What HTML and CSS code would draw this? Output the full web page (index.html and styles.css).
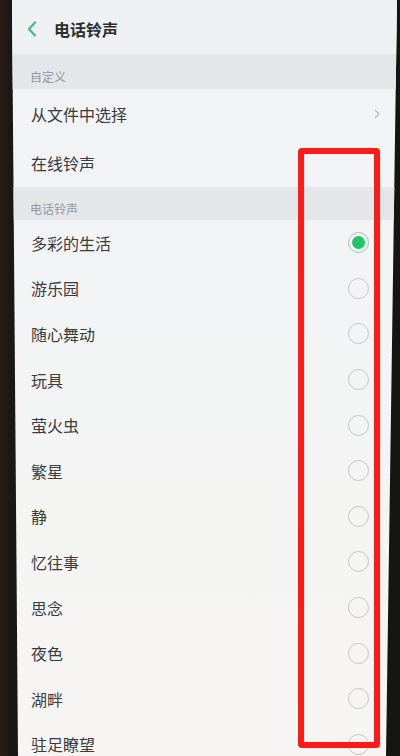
FILE: index.html
```html
<!DOCTYPE html>
<html lang="zh-CN">
<head>
    <meta charset="UTF-8">
    <meta name="viewport" content="width=device-width, initial-scale=1.0">
    <title>电话铃声</title>
    <link rel="stylesheet" href="styles.css">
</head>
<body>
<div class="phone">
    <div class="screen">
        <div class="header">
            <svg class="back" width="12" height="16" viewBox="0 0 12 16">
                <path d="M9 1.5 L3 8 L9 14.5" fill="none" stroke="#3dbd7d" stroke-width="2.2" stroke-linecap="round" stroke-linejoin="round"/>
            </svg>
            <span class="title">电话铃声</span>
        </div>

        <div class="section">自定义</div>
        <div class="item tall">
            <span>从文件中选择</span>
            <svg class="arrow" width="6" height="10" viewBox="0 0 6 10">
                <path d="M1 1 L5 5 L1 9" fill="none" stroke="#b5b7ba" stroke-width="1.2"/>
            </svg>
        </div>
        <div class="item tall"><span>在线铃声</span></div>

        <div class="section short">电话铃声</div>
        <div class="list">
            <div class="item"><span>多彩的生活</span><i class="radio checked"></i></div>
            <div class="item"><span>游乐园</span><i class="radio"></i></div>
            <div class="item"><span>随心舞动</span><i class="radio"></i></div>
            <div class="item"><span>玩具</span><i class="radio"></i></div>
            <div class="item"><span>萤火虫</span><i class="radio"></i></div>
            <div class="item"><span>繁星</span><i class="radio"></i></div>
            <div class="item"><span>静</span><i class="radio"></i></div>
            <div class="item"><span>忆往事</span><i class="radio"></i></div>
            <div class="item"><span>思念</span><i class="radio"></i></div>
            <div class="item"><span>夜色</span><i class="radio"></i></div>
            <div class="item"><span>湖畔</span><i class="radio"></i></div>
            <div class="item"><span>驻足瞭望</span><i class="radio"></i></div>
        </div>
    </div>
    <div class="mark"></div>
</div>
</body>
</html>
```

FILE: styles.css
```css
html, body {
    margin: 0;
    height: 100%;
    overflow: hidden;
}

body {
    background: linear-gradient(90deg, #2a1d14 0px, #1b1713 10px, #151614 100%);
    font-family: "Noto Sans CJK SC", "Noto Sans", sans-serif;
}

.phone {
    position: relative;
    width: 400px;
    height: 756px;
}

.screen {
    height: 756px;
    display: flex;
    flex-direction: column;
    background: linear-gradient(180deg, #f1f3f5 0%, #f3f4f4 50%, #f6f5f3 100%);
    clip-path: polygon(12px 0, 397px 0, 386px 100%, 18px 100%);
}

.header {
    height: 54px;
    flex-shrink: 0;
    display: flex;
    align-items: center;
    padding-left: 26px;
    padding-top: 3px;
    box-sizing: border-box;
    background: #eef0f2;
}

.back {
    margin-right: 16px;
}

.title {
    font-size: 16px;
    font-weight: 700;
    color: #2c2e30;
}

.section {
    height: 35px;
    flex-shrink: 0;
    display: flex;
    align-items: center;
    padding-left: 30px;
    padding-top: 10px;
    box-sizing: border-box;
    background: #e4e6e9;
    font-size: 12px;
    color: #94969a;
}

.section.short {
    height: 33px;
    padding-top: 9px;
}

.item {
    height: 45.6px;
    flex-shrink: 0;
    display: flex;
    align-items: center;
    justify-content: space-between;
    padding: 0 31px 0 31px;
    box-sizing: border-box;
    font-size: 16px;
    color: #3a3b3c;
}

.item.tall {
    height: 49px;
    padding-right: 20px;
}

.arrow {
    margin-top: 1px;
}

.radio {
    width: 21px;
    height: 21px;
    border: 1.5px solid #c2c4c6;
    border-radius: 50%;
    box-sizing: border-box;
    display: flex;
    align-items: center;
    justify-content: center;
}

.radio.checked {
    border-color: #9cc8ad;
}

.radio.checked::after {
    content: "";
    width: 13px;
    height: 13px;
    border-radius: 50%;
    background: #22c468;
}

/* red annotation box drawn over the list */
.mark {
    position: absolute;
    left: 298px;
    top: 148px;
    width: 82px;
    height: 600px;
    border: 6px solid #fe1b17;
    border-radius: 4px;
    box-sizing: border-box;
}
```
